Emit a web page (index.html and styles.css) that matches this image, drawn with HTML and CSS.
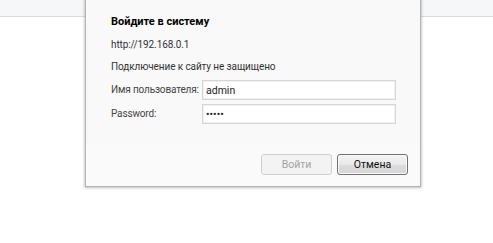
FILE: index.html
```html
<!DOCTYPE html>
<html lang="ru">
<head>
<meta charset="utf-8">
<title>Вход</title>
<link rel="stylesheet" href="styles.css">
</head>
<body>
<div class="topbar"></div>
<div class="dialog">
  <div class="main">
    <div class="title">Войдите в систему</div>
    <div class="line url">http://192.168.0.1</div>
    <div class="line warn">Подключение к сайту не защищено</div>
    <div class="form">
      <label class="lbl" for="u">Имя пользователя:</label>
      <input class="field" id="u" type="text" value="admin">
      <label class="lbl" for="p">Password:</label>
      <input class="field" id="p" type="password" value="admin">
    </div>
  </div>
  <div class="footer">
    <button class="btn btn-disabled" disabled>Войти</button>
    <button class="btn btn-default">Отмена</button>
  </div>
</div>
</body>
</html>
```
FILE: styles.css
```css
html, body {
  margin: 0;
  padding: 0;
  background: #ffffff;
  width: 493px;
  height: 243px;
  overflow: hidden;
  font-family: Roboto, "Liberation Sans", sans-serif;
  font-size: 10px;
  color: #222;
}
.topbar {
  height: 16px;
  background: #f6f7f9;
  border-bottom: 1px solid #d9dbdf;
}
.dialog {
  position: absolute;
  left: 85px;
  top: -1px;
  width: 334px;
  height: 186px;
  border: 1px solid #b4b4b4;
  background: #f9f9f9;
  box-shadow: 0 0 2px 1px rgba(0,0,0,0.12), 0 1px 3px rgba(0,0,0,0.15);
  display: flex;
  flex-direction: column;
}
.main {
  padding: 14px 24px 0 25px;
  display: flex;
  flex-direction: column;
}
.title {
  font-weight: bold;
  font-size: 11px;
  line-height: 16px;
  color: #000;
}
.line {
  line-height: 16px;
  color: #333;
  white-space: nowrap;
  letter-spacing: -0.1px;
}
.url { margin-top: 7px; }
.warn { margin-top: 6px; }
.form {
  margin-top: 5px;
  display: grid;
  grid-template-columns: 91px 194px;
  row-gap: 4px;
  align-items: center;
}
.lbl {
  color: #444;
  line-height: 16px;
  white-space: nowrap;
  letter-spacing: -0.15px;
}
.field {
  box-sizing: border-box;
  height: 20px;
  width: 194px;
  margin: 0;
  border: 1px solid #d6d6d6;
  box-shadow: inset 0 0 0 1px #f1f1f1;
  background: #fff;
  padding: 0 3px;
  font-family: inherit;
  font-size: 10.5px;
  color: #222;
  outline: none;
}
.footer {
  margin-top: auto;
  height: 41px;
  box-sizing: border-box;
  background: #fafafa;
  display: flex;
  justify-content: flex-end;
  align-items: flex-start;
  gap: 5px;
  padding: 9px 12px 0 0;
}
.btn {
  box-sizing: border-box;
  width: 71px;
  height: 21px;
  margin: 0;
  padding: 0;
  border-radius: 3px;
  font-family: inherit;
  font-size: 10.5px;
}
.btn-disabled {
  border: 1px solid #cfcfcf;
  background: #f3f3f3;
  color: #a2a2a2;
}
.btn-default {
  border: 1px solid #707070;
  background: linear-gradient(#f4f4f4, #e9e9e9 50%, #dcdcdc 51%, #d6d6d6);
  box-shadow: inset 0 0 0 1px #fafafa;
  color: #111;
}
```
